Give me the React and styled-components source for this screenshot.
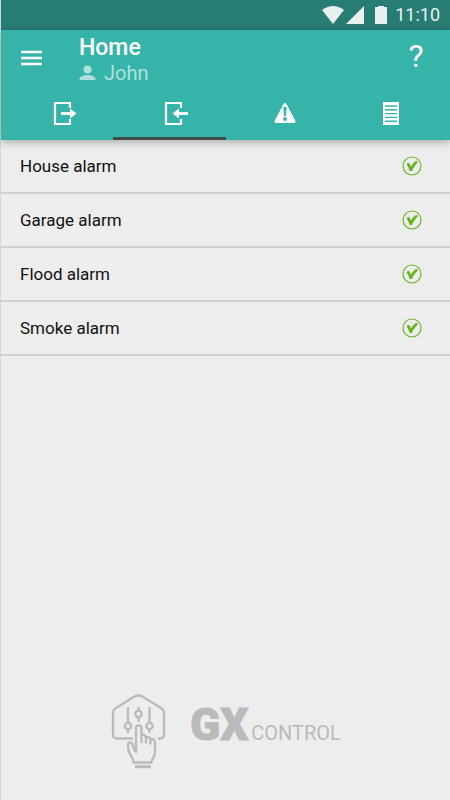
import styled, { createGlobalStyle } from 'styled-components';
import { useState } from 'react';

const GlobalStyle = createGlobalStyle`
* { box-sizing: border-box; }
body {
  margin: 0;
  background: #ededed;
  font-family: Roboto, "Liberation Sans", sans-serif;
}
button {
  border: 0;
  padding: 0;
  background: none;
  color: inherit;
  font: inherit;
  cursor: pointer;
}
`;

const Container = styled.div`
display: flex;
flex-direction: column;
min-height: 100vh;
border-left: 1px solid #c4dedb;
`;
const StatusBar = styled.div`
display: flex;
align-items: center;
justify-content: flex-end;
height: 30px;
padding-right: 10px;
background: #277d73;
color: #e9f2f1;
`;
const Clock = styled.time`
font-size: 18px;
line-height: 30px;
`;
const Header = styled.header`
background: #37b4a9;
color: white;
box-shadow: 0 2px 8px rgba(0,0,0,0.3);
`;
const TopBar = styled.div`
display: flex;
align-items: center;
height: 56px;
padding: 0 20px 0 19px;
`;
const MenuButton = styled.button`
display: flex;
margin-right: 36px;
`;
const Heading = styled.div`
flex: 1;
padding-top: 2px;
`;
const Title = styled.h1`
margin: 0;
font-size: 23px;
font-weight: 500;
line-height: 28px;
`;
const User = styled.div`
display: flex;
align-items: center;
gap: 8px;
color: #afe1dc;
font-size: 20px;
line-height: 22px;
`;
const HelpButton = styled.button`
width: 28px;
padding-bottom: 4px;
font-size: 32px;
line-height: 48px;
`;
const Tabs = styled.nav`
position: relative;
display: flex;
justify-content: space-between;
height: 54px;
padding: 0 51px 0 52px;
`;
const Tab = styled.button`
display: flex;
align-items: center;
`;
const Indicator = styled.span`
position: absolute;
bottom: 0;
left: ${props => props.$index * 25}%;
width: 25%;
height: 3px;
background: #414a49;
`;
const List = styled.ul`
margin: 0;
padding: 0;
list-style: none;
`;
const Row = styled.li`
display: flex;
align-items: center;
justify-content: space-between;
height: 54px;
padding: 0 28px 0 19px;
border-bottom: 2px solid #d0d0d0;
color: #111;
font-size: 17px;
`;
const Footer = styled.footer`
display: flex;
align-items: center;
justify-content: center;
gap: 24px;
margin-top: auto;
padding-bottom: 31px;
color: #bababa;
`;
const Brand = styled.div`
display: flex;
align-items: baseline;
gap: 3px;
padding-bottom: 12px;
`;
const BrandMark = styled.span`
font-size: 44px;
font-weight: 900;
line-height: 48px;
-webkit-text-stroke: 1px currentColor;
`;
const BrandName = styled.span`
font-size: 20px;
`;

const WifiIcon = () => (
  <svg width="24" height="20" viewBox="0 0 24 20" aria-hidden="true">
    <path d="M1 5Q12-3 23 5L12 19Z" fill="currentColor" />
  </svg>
);
const SignalIcon = () => (
  <svg width="20" height="20" viewBox="0 0 20 20" aria-hidden="true">
    <path d="M1 19L19 1V19Z" fill="currentColor" />
  </svg>
);
const BatteryIcon = () => (
  <svg width="30" height="20" viewBox="0 0 30 20" aria-hidden="true">
    <path d="M10 2h3V1h6v1h3v17H10z" fill="currentColor" />
  </svg>
);
const MenuIcon = () => (
  <svg width="23" height="18" viewBox="0 0 23 18" aria-hidden="true">
    <path d="M1 3h21M1 9h21M1 15h21" stroke="currentColor" strokeWidth="2.4" />
  </svg>
);
const UserIcon = () => (
  <svg width="17" height="17" viewBox="0 0 17 17" fill="currentColor" aria-hidden="true">
    <circle cx="8.5" cy="4.5" r="4" />
    <path d="M.5 15v-1c0-2.700 5-4 8-4s8 1.300 8 4v1z" />
  </svg>
);
const ExitIcon = () => (
  <svg width="24" height="24" viewBox="0 0 24 24" aria-hidden="true">
    <path d="M17 7V2H2v21h15v-5" fill="none" stroke="currentColor" strokeWidth="2.200" />
    <path d="M8 11h9V7.500L23.500 12.500l-6.500 5V14H8z" fill="currentColor" />
  </svg>
);
const EnterIcon = () => (
  <svg width="24" height="24" viewBox="0 0 24 24" aria-hidden="true">
    <path d="M17 7V2H2v21h15v-5" fill="none" stroke="currentColor" strokeWidth="2.200" />
    <path d="M24 11h-9V7.500L8.500 12.500l6.500 5V14h9z" fill="currentColor" />
  </svg>
);
const WarningIcon = () => (
  <svg width="22" height="22" viewBox="0 0 22 22" aria-hidden="true">
    <path d="M11 2.500L2 19.500h18z" fill="currentColor" stroke="currentColor" strokeWidth="3" strokeLinejoin="round" />
    <path d="M9.300 5h3.400l-.7 9h-2z" fill="#37b4a9" />
    <circle cx="11" cy="17" r="1.900" fill="#37b4a9" />
  </svg>
);
const LogIcon = () => (
  <svg width="16" height="24" viewBox="0 0 16 24" aria-hidden="true">
    <path d="M0 1h16v23H0z" fill="currentColor" />
    <path d="M2 5h12M2 8.800h12M2 12.600h12M2 16.400h12M2 20.200h12" stroke="#37b4a9" strokeWidth="1.400" />
  </svg>
);
const CheckIcon = () => (
  <svg width="20" height="20" viewBox="0 0 20 20" fill="none" role="img" aria-label="On">
    <circle cx="10" cy="10" r="9" stroke="#6cb52c" strokeWidth="1.200" />
    <path d="M4.500 8L7 6.700 9 10.500C10.300 8 12 6 14.500 4.700L15.800 6.500C13 9 11.500 11.500 9.800 15H7.700Q6.500 11 4.500 8z" fill="#67b51d" />
  </svg>
);
const LogoIcon = () => (
  <svg width="56" height="76" viewBox="0 0 56 76" fill="none" stroke="currentColor" strokeWidth="2.300" strokeLinejoin="round" aria-hidden="true">
    <path d="M23 45.500H7q-4 0-4-4V20q0-3 3-5L24.500 3.500q4-2 8 0L51 15q3 2 3 5v21.500q0 4-4 4h-2" />
    <path d="M18 14v16M18 36v4M28.500 14v4M28.500 24v5M39.500 14v16M39.500 36v4" />
    <circle cx="18" cy="33" r="3.200" />
    <circle cx="28.500" cy="21" r="3.200" />
    <circle cx="39.500" cy="33" r="3.200" />
    <path d="M26 60V35q0-2.700 2.700-2.700t2.700 2.700v15M31.400 41.500q4.600-.5 4.600 4v5M36 44q4.500-.5 4.500 3.500v4M40.500 46q4.500-.5 4.500 4v9q0 4-2.500 7-1 1.500-1 3.500h-18q0-2.500-2-6-3.500-5-3.500-11-.5-3 2-3t3 3q.7 4.500 3 6.500" />
    <path d="M25 73.700h16" strokeWidth="3" />
  </svg>
);

const tabs = [
  { label: 'Unset', Icon: ExitIcon },
  { label: 'Set', Icon: EnterIcon },
  { label: 'Alarms', Icon: WarningIcon },
  { label: 'Event log', Icon: LogIcon },
];
const alarms = ['House alarm', 'Garage alarm', 'Flood alarm', 'Smoke alarm'];

const App = () => {
  const [active, setActive] = useState(1);

  return (
    <Container>
      <GlobalStyle />
      <StatusBar>
        <WifiIcon />
        <SignalIcon />
        <BatteryIcon />
        <Clock>11:10</Clock>
      </StatusBar>
      <Header>
        <TopBar>
          <MenuButton aria-label="Menu"><MenuIcon /></MenuButton>
          <Heading>
            <Title>Home</Title>
            <User><UserIcon />John</User>
          </Heading>
          <HelpButton>?</HelpButton>
        </TopBar>
        <Tabs>
          {tabs.map(({ label, Icon }, i) => (
            <Tab key={label} aria-label={label} onClick={() => setActive(i)}>
              <Icon />
            </Tab>
          ))}
          <Indicator $index={active} />
        </Tabs>
      </Header>
      <List>
        {alarms.map(name => (
          <Row key={name}>{name}<CheckIcon /></Row>
        ))}
      </List>
      <Footer>
        <LogoIcon />
        <Brand>
          <BrandMark>GX</BrandMark>
          <BrandName>CONTROL</BrandName>
        </Brand>
      </Footer>
    </Container>
  )
}

export default App
